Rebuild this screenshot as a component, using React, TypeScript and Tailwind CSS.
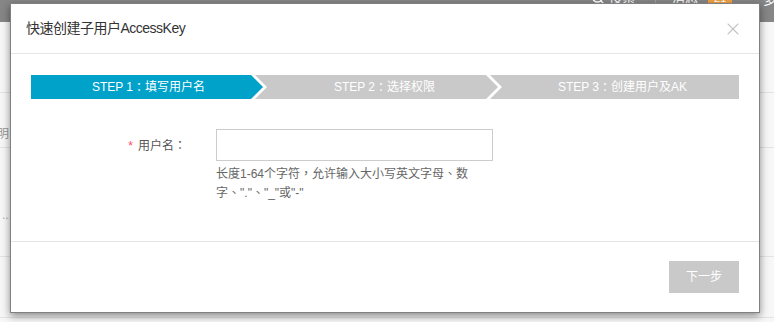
import { X, Search } from "lucide-react";

const font = "font-['Liberation_Sans','Noto_Sans_CJK_SC',sans-serif]";

// centred full-width punctuation, as in the reference
function P({ c }: { c: string }) {
  return <span className="font-['Noto_Sans_CJK_TC',sans-serif]">{c}</span>;
}

function Steps() {
  return (
    <div className="flex h-[24px] text-[12px] leading-[24px] text-white">
      <div className="flex w-[232px] shrink-0 items-center justify-center bg-[#00a2ca] pl-[3px] [clip-path:polygon(0_0,calc(100%_-_12px)_0,100%_50%,calc(100%_-_12px)_100%,0_100%)]">
        STEP 1<P c="：" />填写用户名
      </div>
      <div className="-ml-[8px] flex w-[243px] shrink-0 items-center justify-center bg-[#c9c9c9] pl-[16px] [clip-path:polygon(0_0,calc(100%_-_12px)_0,100%_50%,calc(100%_-_12px)_100%,0_100%,12px_50%)]">
        STEP 2<P c="：" />选择权限
      </div>
      <div className="-ml-[8px] flex flex-1 items-center justify-center bg-[#c9c9c9] pl-[16px] [clip-path:polygon(0_0,100%_0,100%_100%,0_100%,12px_50%)]">
        STEP 3<P c="：" />创建用户及AK
      </div>
    </div>
  );
}

function Backdrop() {
  return (
    <div className="flex h-full flex-col bg-[#f7f7f7]">
      <div className="relative h-[22px] bg-[#868686]">
        <div className="absolute -top-[12px] left-[591px] flex items-center gap-[4px] text-[13px] text-white">
          <Search size={14} strokeWidth={2.5} />
          <span>搜索</span>
        </div>
        <div className="absolute left-[655px] top-0 h-[4px] w-px bg-[#a0a0a0]" />
        <div className="absolute -top-[12px] left-[672px] flex items-center gap-[10px] text-[13px] text-white">
          <span>消息</span>
          <span className="bg-[#f0a040] px-[6px] text-[11px] leading-[14px]">21</span>
        </div>
        <div className="absolute -top-[10px] left-[763px] text-[13px] text-white">多</div>
      </div>
      <div className="h-[71px] border-b border-[#e3e3e3]" />
      <div className="relative h-[55px] border-b border-[#e3e3e3]">
        <span className="absolute -left-[3px] top-[32px] text-[12px] text-[#999]">明</span>
      </div>
      <div className="relative h-[109px] border-b border-[#e3e3e3]">
        <span className="absolute left-[2px] top-[58px] text-[12px] text-[#aab]">...</span>
      </div>
      <div className="h-[61px] border-b border-[#e3e3e3]" />
    </div>
  );
}

export default function App() {
  return (
    <div className={`relative h-[322px] w-[774px] overflow-hidden ${font}`}>
      <Backdrop />

      <div className="absolute left-[10px] top-[3px] w-[750px] border border-[#808080] bg-white shadow-[0_3px_8px_rgba(0,0,0,0.45)]">
        <div className="flex h-[50px] items-center justify-between border-b border-[#e5e5e5] pl-[15px] pr-[16px]">
          <h3 className="text-[14px] tracking-[-0.5px] text-[#333]">快速创建子用户AccessKey</h3>
          <X size={20} strokeWidth={1.3} className="text-[#c4c4c4]" />
        </div>

        <div className="px-[20px] pb-[39px] pt-[21px]">
          <Steps />

          <div className="mt-[30px] flex gap-[30px]">
            <label className="h-[32px] w-[155px] text-right text-[12px] leading-[32px] text-[#555]">
              <span className="mr-[5px] text-[#ff4d6a]">*</span>
              用户名<P c="：" />
            </label>
            <div>
              <input
                type="text"
                className="block h-[32px] w-[277px] border border-[#ccc] px-[8px] text-[12px] outline-none"
              />
              <p className="mt-[3px] w-[260px] text-[12px] leading-[18px] text-[#666]">
                长度1-64个字符<P c="，" />允许输入大小写英文字母<P c="、" />数字<P c="、" />"."<P c="、" />"_"或"-"
              </p>
            </div>
          </div>
        </div>

        <div className="flex justify-end border-t border-[#e5e5e5] px-[20px] pb-[19px] pt-[19px]">
          <button
            type="button"
            disabled
            className="h-[32px] w-[70px] bg-[#c9c9c9] text-[12px] text-white"
          >
            下一步
          </button>
        </div>
      </div>
    </div>
  );
}
